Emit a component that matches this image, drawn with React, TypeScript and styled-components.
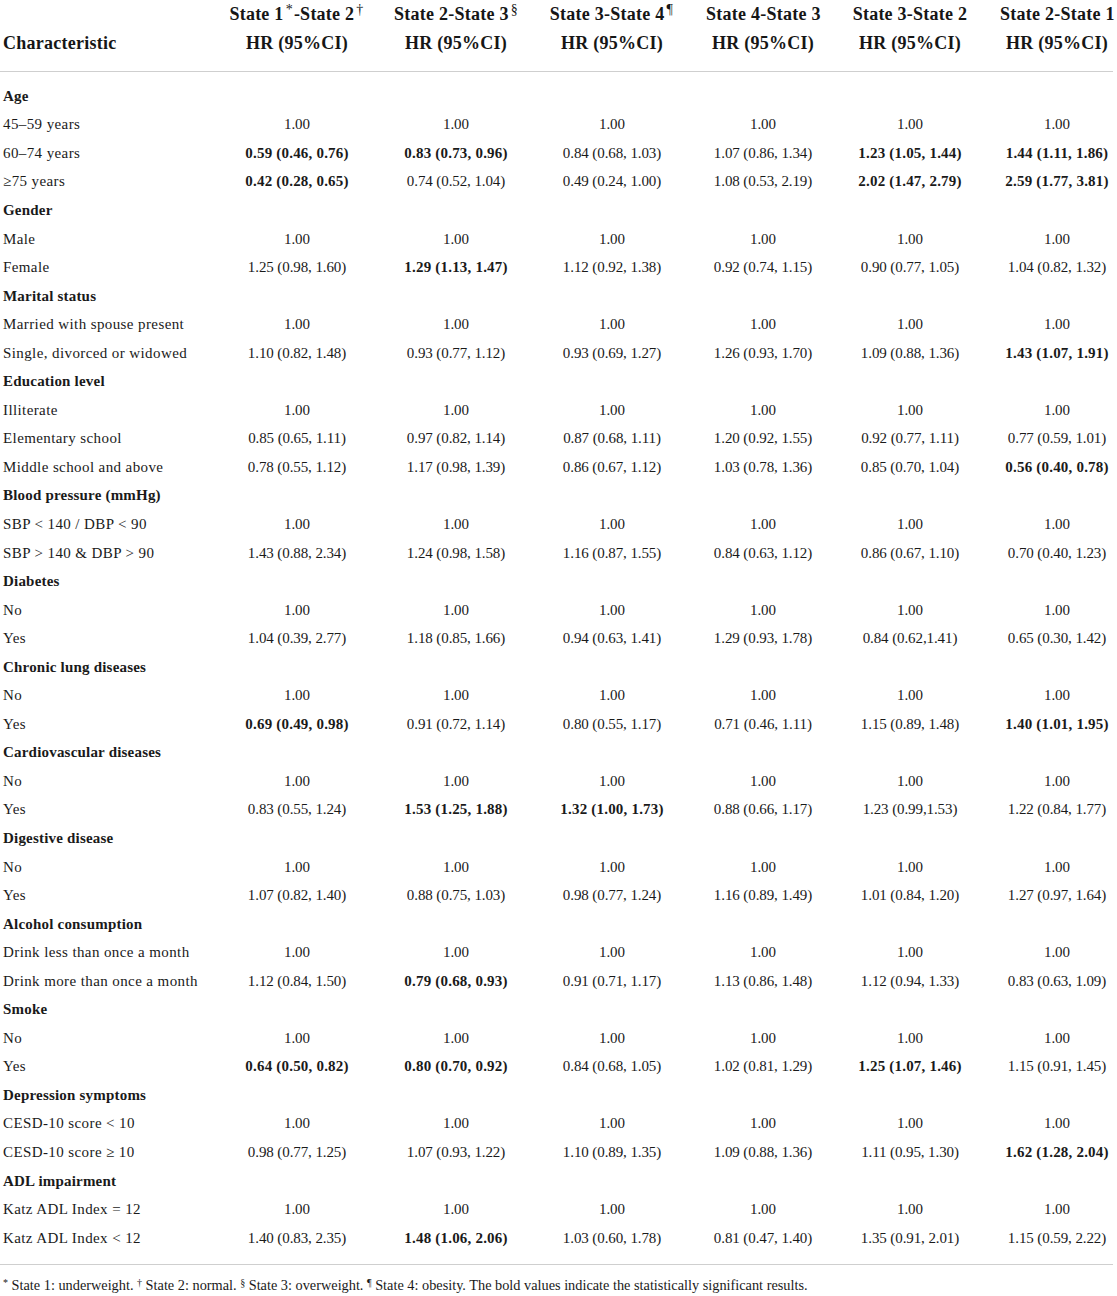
import React from "react";
import styled, { createGlobalStyle } from "styled-components";

const Global = createGlobalStyle`
  html, body { margin: 0; padding: 0; background: #ffffff; }
  body { font-family: "Liberation Serif", "Times New Roman", serif; color: #1a1a1a; }
`;

const COLS = "200px 194px 124px 188px 114px 180px 114px";

const Page = styled.div`
  width: 1117px;
  display: flex;
  flex-direction: column;
`;

const HeaderRow = styled.div`
  display: grid;
  grid-template-columns: ${COLS};
  align-items: end;
  margin-bottom: 13px;
`;

const HeaderCell = styled.div<{ $left?: boolean }>`
  font-size: 18px;
  font-weight: bold;
  line-height: 29px;
  letter-spacing: 0.25px;
  text-align: ${(p) => (p.$left ? "left" : "center")};
  padding-left: ${(p) => (p.$left ? "3px" : "0")};
  white-space: nowrap;
  color: #161616;
`;

const Sup = styled.sup`
  font-size: 14px;
  font-weight: normal;
  vertical-align: 6px;
  line-height: 0;
  margin: 0 1px 0 2px;
`;

const Rule = styled.div`
  width: 1113px;
  height: 1px;
  background: #cfcfcf;
`;

const Body = styled.div`
  display: flex;
  flex-direction: column;
  padding: 10px 0 12px;
`;

const Row = styled.div`
  display: grid;
  grid-template-columns: ${COLS};
  height: 28.55px;
  align-items: center;
`;

const Label = styled.div<{ $section?: boolean }>`
  font-size: 15px;
  letter-spacing: ${(p) => (p.$section ? "0.2px" : "0.4px")};
  font-weight: ${(p) => (p.$section ? "bold" : "normal")};
  padding-left: 3px;
  white-space: nowrap;
`;

const Value = styled.div<{ $bold?: boolean }>`
  font-size: 15px;
  letter-spacing: ${(p) => (p.$bold ? "0.2px" : "-0.1px")};
  font-weight: ${(p) => (p.$bold ? "bold" : "normal")};
  text-align: center;
  white-space: nowrap;
`;

const Footnote = styled.div`
  font-size: 14.3px;
  line-height: 20px;
  padding: 10px 0 0 3px;
  white-space: nowrap;
`;

const FnSup = styled.sup`
  font-size: 10px;
  vertical-align: 4px;
  line-height: 0;
`;

type Cell = string | { b: string };
type RowData = { label: string; section?: boolean; values?: Cell[] };

const ones: Cell[] = ["1.00", "1.00", "1.00", "1.00", "1.00", "1.00"];
const b = (s: string): Cell => ({ b: s });

const rows: RowData[] = [
  { label: "Age", section: true },
  { label: "45–59 years", values: ones },
  {
    label: "60–74 years",
    values: [b("0.59 (0.46, 0.76)"), b("0.83 (0.73, 0.96)"), "0.84 (0.68, 1.03)", "1.07 (0.86, 1.34)", b("1.23 (1.05, 1.44)"), b("1.44 (1.11, 1.86)")],
  },
  {
    label: "≥75 years",
    values: [b("0.42 (0.28, 0.65)"), "0.74 (0.52, 1.04)", "0.49 (0.24, 1.00)", "1.08 (0.53, 2.19)", b("2.02 (1.47, 2.79)"), b("2.59 (1.77, 3.81)")],
  },
  { label: "Gender", section: true },
  { label: "Male", values: ones },
  {
    label: "Female",
    values: ["1.25 (0.98, 1.60)", b("1.29 (1.13, 1.47)"), "1.12 (0.92, 1.38)", "0.92 (0.74, 1.15)", "0.90 (0.77, 1.05)", "1.04 (0.82, 1.32)"],
  },
  { label: "Marital status", section: true },
  { label: "Married with spouse present", values: ones },
  {
    label: "Single, divorced or widowed",
    values: ["1.10 (0.82, 1.48)", "0.93 (0.77, 1.12)", "0.93 (0.69, 1.27)", "1.26 (0.93, 1.70)", "1.09 (0.88, 1.36)", b("1.43 (1.07, 1.91)")],
  },
  { label: "Education level", section: true },
  { label: "Illiterate", values: ones },
  {
    label: "Elementary school",
    values: ["0.85 (0.65, 1.11)", "0.97 (0.82, 1.14)", "0.87 (0.68, 1.11)", "1.20 (0.92, 1.55)", "0.92 (0.77, 1.11)", "0.77 (0.59, 1.01)"],
  },
  {
    label: "Middle school and above",
    values: ["0.78 (0.55, 1.12)", "1.17 (0.98, 1.39)", "0.86 (0.67, 1.12)", "1.03 (0.78, 1.36)", "0.85 (0.70, 1.04)", b("0.56 (0.40, 0.78)")],
  },
  { label: "Blood pressure (mmHg)", section: true },
  { label: "SBP < 140 / DBP < 90", values: ones },
  {
    label: "SBP > 140 & DBP > 90",
    values: ["1.43 (0.88, 2.34)", "1.24 (0.98, 1.58)", "1.16 (0.87, 1.55)", "0.84 (0.63, 1.12)", "0.86 (0.67, 1.10)", "0.70 (0.40, 1.23)"],
  },
  { label: "Diabetes", section: true },
  { label: "No", values: ones },
  {
    label: "Yes",
    values: ["1.04 (0.39, 2.77)", "1.18 (0.85, 1.66)", "0.94 (0.63, 1.41)", "1.29 (0.93, 1.78)", "0.84 (0.62,1.41)", "0.65 (0.30, 1.42)"],
  },
  { label: "Chronic lung diseases", section: true },
  { label: "No", values: ones },
  {
    label: "Yes",
    values: [b("0.69 (0.49, 0.98)"), "0.91 (0.72, 1.14)", "0.80 (0.55, 1.17)", "0.71 (0.46, 1.11)", "1.15 (0.89, 1.48)", b("1.40 (1.01, 1.95)")],
  },
  { label: "Cardiovascular diseases", section: true },
  { label: "No", values: ones },
  {
    label: "Yes",
    values: ["0.83 (0.55, 1.24)", b("1.53 (1.25, 1.88)"), b("1.32 (1.00, 1.73)"), "0.88 (0.66, 1.17)", "1.23 (0.99,1.53)", "1.22 (0.84, 1.77)"],
  },
  { label: "Digestive disease", section: true },
  { label: "No", values: ones },
  {
    label: "Yes",
    values: ["1.07 (0.82, 1.40)", "0.88 (0.75, 1.03)", "0.98 (0.77, 1.24)", "1.16 (0.89, 1.49)", "1.01 (0.84, 1.20)", "1.27 (0.97, 1.64)"],
  },
  { label: "Alcohol consumption", section: true },
  { label: "Drink less than once a month", values: ones },
  {
    label: "Drink more than once a month",
    values: ["1.12 (0.84, 1.50)", b("0.79 (0.68, 0.93)"), "0.91 (0.71, 1.17)", "1.13 (0.86, 1.48)", "1.12 (0.94, 1.33)", "0.83 (0.63, 1.09)"],
  },
  { label: "Smoke", section: true },
  { label: "No", values: ones },
  {
    label: "Yes",
    values: [b("0.64 (0.50, 0.82)"), b("0.80 (0.70, 0.92)"), "0.84 (0.68, 1.05)", "1.02 (0.81, 1.29)", b("1.25 (1.07, 1.46)"), "1.15 (0.91, 1.45)"],
  },
  { label: "Depression symptoms", section: true },
  { label: "CESD-10 score < 10", values: ones },
  {
    label: "CESD-10 score ≥ 10",
    values: ["0.98 (0.77, 1.25)", "1.07 (0.93, 1.22)", "1.10 (0.89, 1.35)", "1.09 (0.88, 1.36)", "1.11 (0.95, 1.30)", b("1.62 (1.28, 2.04)")],
  },
  { label: "ADL impairment", section: true },
  { label: "Katz ADL Index = 12", values: ones },
  {
    label: "Katz ADL Index < 12",
    values: ["1.40 (0.83, 2.35)", b("1.48 (1.06, 2.06)"), "1.03 (0.60, 1.78)", "0.81 (0.47, 1.40)", "1.35 (0.91, 2.01)", "1.15 (0.59, 2.22)"],
  },
];

const headers: { a: string; sa?: string; b: string; sb?: string }[] = [
  { a: "State 1", sa: "*", b: "-State 2", sb: "†" },
  { a: "State 2-State 3", b: "", sb: "§" },
  { a: "State 3-State 4", b: "", sb: "¶" },
  { a: "State 4-State 3", b: "" },
  { a: "State 3-State 2", b: "" },
  { a: "State 2-State 1", b: "" },
];

export default function App() {
  return (
    <Page>
      <Global />
      <HeaderRow>
        <HeaderCell $left>Characteristic</HeaderCell>
        {headers.map((h, i) => (
          <HeaderCell key={i}>
            {h.a}
            {h.sa && <Sup>{h.sa}</Sup>}
            {h.b}
            {h.sb && <Sup>{h.sb}</Sup>}
            <br />
            HR (95%CI)
          </HeaderCell>
        ))}
      </HeaderRow>
      <Rule />
      <Body>
        {rows.map((r, i) => (
          <Row key={i}>
            <Label $section={r.section}>{r.label}</Label>
            {r.values?.map((v, j) =>
              typeof v === "string" ? (
                <Value key={j}>{v}</Value>
              ) : (
                <Value key={j} $bold>
                  {v.b}
                </Value>
              )
            )}
          </Row>
        ))}
      </Body>
      <Rule />
      <Footnote>
        <FnSup>*</FnSup> State 1: underweight. <FnSup>†</FnSup> State 2: normal. <FnSup>§</FnSup> State 3:
        overweight. <FnSup>¶</FnSup> State 4: obesity. The bold values indicate the statistically significant
        results.
      </Footnote>
    </Page>
  );
}
